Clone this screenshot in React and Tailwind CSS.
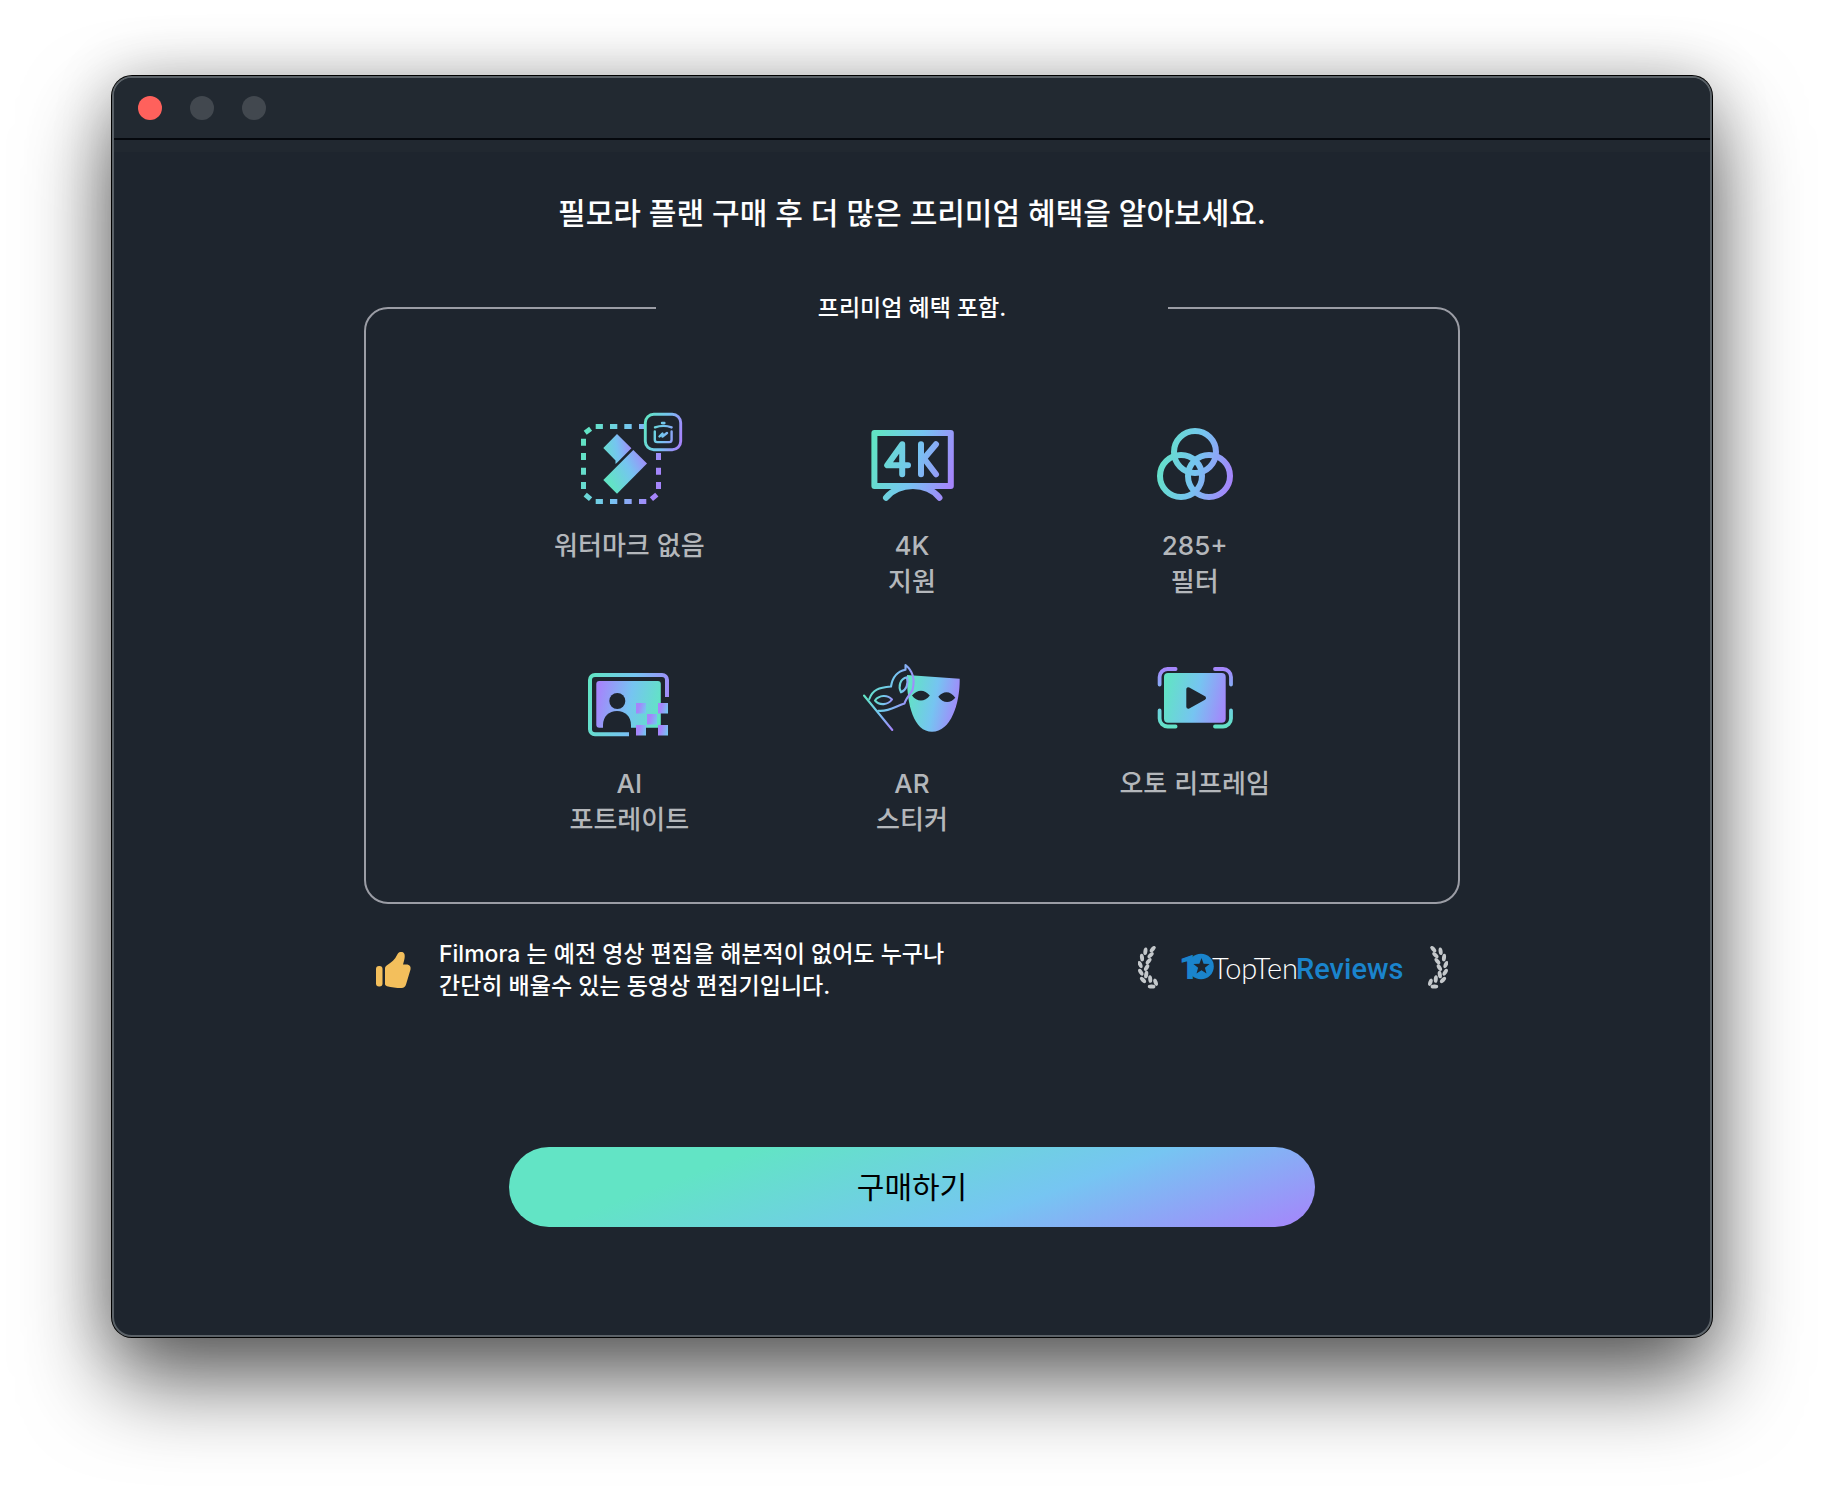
import { useId } from 'react'

const GradientDef = ({ id, box, reverse }) => {
  const [x1, y1, x2, y2] = box
  const stops = ['#62e3c5', '#76c4f1', '#a585fb']
  const colors = reverse ? [...stops].reverse() : stops
  return (
    <linearGradient id={id} gradientUnits="userSpaceOnUse" x1={x1} y1={y1} x2={x2} y2={y2}>
      <stop offset="0" stopColor={colors[0]} />
      <stop offset="0.52" stopColor={colors[1]} />
      <stop offset="1" stopColor={colors[2]} />
    </linearGradient>
  )
}

const IconFrame = ({ children }) => (
  <svg viewBox="0 0 120 100" width="120" height="100" fill="none" aria-hidden="true">
    {children}
  </svg>
)

const WatermarkIcon = () => {
  const id = useId()
  return (
    <IconFrame>
      <defs>
        <GradientDef id={`${id}a`} box={[14, 40, 90, 62]} />
        <GradientDef id={`${id}b`} box={[36, 62, 76, 42]} />
        <GradientDef id={`${id}c`} box={[75, 18, 112, 28]} />
        <GradientDef id={`${id}d`} box={[30, 36, 63, 30]} />
      </defs>
      <path
        stroke={`url(#${id}a)`}
        strokeWidth="5"
        d="M26.7 16.5h7.2M41 16.5h7.3M55.3 16.5h7.4M70 16.5h6M26.7 91.5h7.2M41 91.5h7.3M55.3 91.5h7.4M70 91.5h7.3M14.5 28.7v7M14.5 43v7M14.5 57.7v7M14.5 72v7M89.5 43v7M89.5 57.7v7M89.5 72v7M16.2 22.8l5.4-4M16.2 84.6l5.4 4.6M87.8 84.6l-5.4 4.6"
      />
      <path fill={`url(#${id}d)`} d="M48 24l14.4 14.3L48.5 52.2 46.5 54v-3.4L34.3 38z" />
      <path fill={`url(#${id}b)`} d="M64.3 40L78 53.5 48 83.7 34.3 70z" />
      <rect x="76.3" y="4.3" width="35.4" height="35.4" rx="8.5" fill="#1e252e" stroke={`url(#${id}c)`} strokeWidth="2.9" />
      <g stroke={`url(#${id}c)`} strokeWidth="2.4" strokeLinecap="round" strokeLinejoin="round">
        <path d="M86 17.4c5-1.8 12-1.8 16.6 0M93 13h2.4" />
        <path d="M85.8 21.5v8.2c0 1.6.8 2.4 2.4 2.4h12c1.6 0 2.4-.8 2.4-2.4v-8.2" />
        <path d="M90.5 26.5l3-3v3l4.5-3.5" />
      </g>
    </IconFrame>
  )
}

const FourKIcon = () => {
  const id = useId()
  return (
    <IconFrame>
      <defs>
        <GradientDef id={id} box={[20, 42, 101, 66]} />
      </defs>
      <g stroke={`url(#${id})`} strokeWidth="6" strokeLinecap="round" strokeLinejoin="round">
        <rect x="22.4" y="23" width="76.4" height="53" />
        <path d="M34 87.7C47.5 72.2 74.5 72.2 87.5 87.7" />
        <path d="M50.2 64.3v-30L35.2 55.3H56M69 34.3v30M84 34.3L72 48.5 84 64.3" />
      </g>
    </IconFrame>
  )
}

const FiltersIcon = () => {
  const id = useId()
  return (
    <IconFrame>
      <defs>
        <GradientDef id={id} box={[22, 48, 97, 66]} />
      </defs>
      <g stroke={`url(#${id})`} strokeWidth="6">
        <circle cx="60" cy="42" r="21" />
        <circle cx="46" cy="66" r="21" />
        <circle cx="74" cy="66" r="21" />
      </g>
    </IconFrame>
  )
}

const PIXELS = [
  [67, 55],
  [89, 55],
  [78, 66],
  [67, 77],
  [89, 77],
]

const PortraitIcon = () => {
  const id = useId()
  return (
    <IconFrame>
      <defs>
        <GradientDef id={`${id}a`} box={[19, 48, 100, 64]} />
        <GradientDef id={`${id}b`} box={[28, 50, 90, 62]} reverse />
        <linearGradient id={`${id}c`} x1="0" y1="0.3" x2="1" y2="0.6">
          <stop offset="0.3" stopColor="#a585fb" />
          <stop offset="1" stopColor="#76c4f1" />
        </linearGradient>
      </defs>
      <path
        stroke={`url(#${id}a)`}
        strokeWidth="4"
        d="M98 49V32a5 5 0 0 0-5-5H26a5 5 0 0 0-5 5v49.3a5 5 0 0 0 5 5h34"
      />
      <rect x="27.3" y="33" width="64.5" height="46.7" rx="3" fill={`url(#${id}b)`} />
      <circle cx="48.3" cy="53" r="8" fill="#1e252e" />
      <path fill="#1e252e" d="M34 80v-3c0-8.5 6-14 14-14s14 5.5 14 14v3z" />
      {PIXELS.map(([x, y]) => (
        <rect key={`${x}-${y}`} x={x} y={y} width="10" height="10.5" fill={`url(#${id}c)`} />
      ))}
    </IconFrame>
  )
}

const MasksIcon = () => {
  const id = useId()
  return (
    <IconFrame>
      <defs>
        <GradientDef id={`${id}a`} box={[55, 50, 107, 60]} />
        <GradientDef id={`${id}b`} box={[16, 36, 62, 48]} />
        <GradientDef id={`${id}c`} box={[12, 50, 42, 80]} />
        <GradientDef id={`${id}d`} box={[22, 50, 42, 54]} />
        <GradientDef id={`${id}e`} box={[45, 36, 58, 38]} />
      </defs>
      <path fill={`url(#${id}a)`} d="M55 27l52.7 3.7C108 56 98.5 83.8 80 83.8 62 83.8 54.5 57 55 27z" />
      <path
        fill="#1e252e"
        d="M60 47.5c5.5-6.5 12.5-6.5 17.8 0-5 6.6-12.8 6.6-17.8 0zM86.3 48.8c5-6.5 12.5-6 17 1-5 6-12.5 5.5-17-1z"
      />
      <g strokeWidth="2.1" strokeLinecap="round" strokeLinejoin="round">
        <path
          stroke={`url(#${id}b)`}
          d="M17.3 51C20.5 41.5 27 39.5 39 38.5 40.5 29 45 23.5 53.5 21.8V17C61 23 63 32 60.5 42 58.5 46 54 50 52.5 55.5 43 58.5 37 64 26.3 62.8"
        />
        <path stroke={`url(#${id}c)`} d="M12 47.5L40.3 82" />
        <path stroke={`url(#${id}d)`} d="M23 52.5c4-5.5 12.5-6 17-1-4 5.5-12.5 6.5-17 1z" />
        <path stroke={`url(#${id}e)`} d="M49 44.3c-3-6-1-13.5 6-15 1.5 6.5-.5 13-6 15z" />
      </g>
    </IconFrame>
  )
}

const ReframeIcon = () => {
  const id = useId()
  return (
    <IconFrame>
      <defs>
        <GradientDef id={`${id}a`} box={[29, 44, 92, 58]} />
        <GradientDef id={`${id}b`} box={[60, 80, 60, 20]} />
      </defs>
      <rect x="29" y="25" width="61.7" height="49.7" rx="4" fill={`url(#${id}a)`} />
      <path fill="#1e252e" stroke="#1e252e" strokeWidth="4" strokeLinejoin="round" d="M53.3 41.3v17.5L69 50z" />
      <path
        stroke={`url(#${id}b)`}
        strokeWidth="3.8"
        strokeLinecap="round"
        d="M24.6 36.5V29a8 8 0 0 1 8-8h8M80 21h8a8 8 0 0 1 8 8v7.5M96 62.5v8a8 8 0 0 1-8 8h-8M40.6 78.5h-8a8 8 0 0 1-8-8v-8"
      />
    </IconFrame>
  )
}

const ThumbIcon = () => (
  <svg viewBox="0 0 36 38" width="36" height="38" fill="#f3bf5c" aria-hidden="true">
    <rect x="1" y="15" width="6.5" height="20.5" rx="3" />
    <path d="M10 17.5c0-1.5.6-2.5 2-3.3 4.5-2.7 8-5.7 10.3-10.7C23.3 1.5 24.5 1 26 1c3 0 4 2 3.7 5-.2 2.7-1 5-1.7 7.5h4.5c2.5.5 3.5 2.5 3 5l-4.5 15c-.7 2.2-2 3.5-4.5 3.5-5.5 0-10-.7-14.5-1.8-1.3-.4-2-1.2-2-2.5z" />
  </svg>
)

// cx, cy, rotation of each leaf
const LEAVES = [
  [14.7, 3.2, 42],
  [7.4, 5.2, 8],
  [12.6, 9.2, 45],
  [4, 11.6, -8],
  [10.6, 15.2, 40],
  [2.2, 18.6, -22],
  [8.6, 21.6, 32],
  [2.8, 26.2, -32],
  [8.2, 28.6, 10],
  [5, 34, -45],
  [12.2, 33, -5],
  [17.6, 36.2, -20],
  [13.6, 40.6, 92],
]

const Laurel = ({ className }) => (
  <svg viewBox="0 0 20 44" width="20" height="44" fill="#c4c8cb" aria-hidden="true" className={className}>
    {LEAVES.map(([x, y, r]) => (
      <ellipse key={`${x}-${y}`} cx={x} cy={y} rx="2" ry="3.8" transform={`rotate(${r} ${x} ${y})`} />
    ))}
  </svg>
)

const TopTenLogo = () => (
  <svg viewBox="0 0 230 40" width="230" height="40" role="img" aria-label="10TopTenReviews">
    <circle cx="23" cy="18.5" r="12.8" fill="#1a84cc" />
    <path fill="#1e252e" d="M23.5 10l2.1 5.7 6 .3-4.7 3.8 1.6 5.8-5-3.3-5 3.3 1.6-5.8-4.7-3.8 6-.3z" />
    <text x="1" y="31" fontFamily="Roboto, sans-serif" fontSize="34" fontWeight="900" fill="#1a84cc">
      1
    </text>
    <text x="34" y="31" fontFamily="Lato, sans-serif" fontSize="29" fontWeight="300" fill="#ffffff">
      TopTen
    </text>
    <text x="118" y="31" fontFamily="Roboto, sans-serif" fontSize="29" fontWeight="500" fill="#1a84cc">
      Reviews
    </text>
  </svg>
)

const benefits = [
  { icon: WatermarkIcon, lines: ['워터마크 없음'] },
  { icon: FourKIcon, lines: ['4K', '지원'] },
  { icon: FiltersIcon, lines: ['285+', '필터'] },
  { icon: PortraitIcon, lines: ['AI', '포트레이트'] },
  { icon: MasksIcon, lines: ['AR', '스티커'] },
  { icon: ReframeIcon, lines: ['오토 리프레임'] },
]

const Benefit = ({ icon: Icon, lines }) => (
  <li className="flex flex-col items-center gap-[18px]">
    <Icon />
    <p className="text-center text-[26px] leading-9 font-medium text-[#b4b7bb]">
      {lines.map((line) => (
        <span key={line} className="block whitespace-nowrap">
          {line}
        </span>
      ))}
    </p>
  </li>
)

const TitleBar = () => (
  <header className="flex h-[62px] items-center gap-7 border-b-2 border-[#05080d] bg-[#222931] px-6">
    <button type="button" aria-label="Close" className="size-6 rounded-full bg-[#ff615c]" />
    <button type="button" aria-label="Minimize" className="size-6 rounded-full bg-[#42484f]" />
    <button type="button" aria-label="Zoom" className="size-6 rounded-full bg-[#42484f]" />
  </header>
)

const App = () => {
  return (
    <div className="min-h-screen bg-white px-28 pt-[76px] pb-[148px] font-[Inter,'Noto_Sans_CJK_KR',sans-serif]">
      <div className="overflow-hidden rounded-[20px] border-2 border-[#5b6268] bg-[#1e252e] shadow-[0_0_0_1px_#000,0_44px_88px_rgba(0,0,0,0.62),0_0_60px_rgba(0,0,0,0.2)]">
        <TitleBar />
        <div className="h-3 bg-[#212830]" />
        <main className="mx-auto flex w-full max-w-[1096px] flex-col pt-[43px] pb-[108px]">
          <h1 className="text-center text-[30px] leading-9 font-medium text-white">
            필모라 플랜 구매 후 더 많은 프리미엄 혜택을 알아보세요.
          </h1>
          <fieldset className="mt-[61px] min-w-0 rounded-3xl border-2 border-[#9b9da5] px-[122px] pt-[86px] pb-16">
            <legend className="mx-auto w-[512px] text-center text-[23px] leading-8 font-medium text-white">
              프리미엄 혜택 포함.
            </legend>
            <ul className="grid grid-cols-3 gap-y-12">
              {benefits.map((benefit) => (
                <Benefit key={benefit.lines.join(' ')} {...benefit} />
              ))}
            </ul>
          </fieldset>
          <div className="mt-[34px] flex items-center justify-between pr-3 pl-[11px]">
            <div className="flex items-center gap-7">
              <ThumbIcon />
              <p className="text-[23px] leading-8 font-medium text-white">
                Filmora 는 예전 영상 편집을 해본적이 없어도 누구나
                <br />
                간단히 배울수 있는 동영상 편집기입니다.
              </p>
            </div>
            <div className="flex items-center gap-5 pb-1">
              <Laurel />
              <TopTenLogo />
              <Laurel className="-scale-x-100" />
            </div>
          </div>
          <button
            type="button"
            className="mx-auto mt-[145px] h-20 w-full max-w-[806px] rounded-full bg-[linear-gradient(160deg,#62e4c5_25%,#76c5f2_65%,#a684fb_100%)] text-[30px] text-black"
          >
            구매하기
          </button>
        </main>
      </div>
    </div>
  )
}

export default App
